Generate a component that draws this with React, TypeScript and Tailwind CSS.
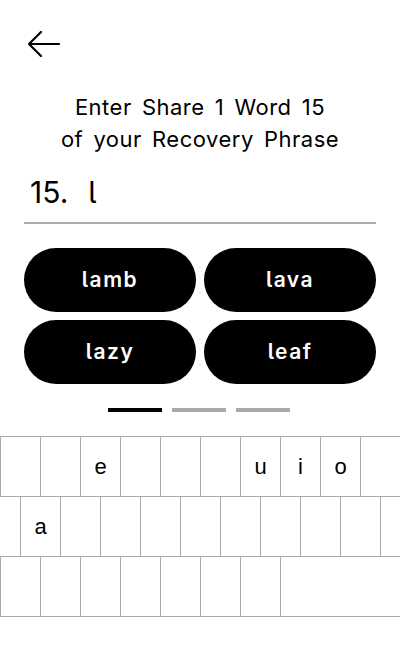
import React from "react";

const inter = "font-['Inter','Noto_Sans',sans-serif] [font-feature-settings:'cv05']";

function Key({ ch, className = "" }: { ch?: string; className?: string }) {
  return (
    <div
      className={`h-full border-l border-[#aaaaaa] flex items-center justify-center text-[22px] text-black font-['Liberation_Sans',Arial,sans-serif] ${className}`}
    >
      {ch ?? ""}
    </div>
  );
}

export default function App() {
  const words = ["lamb", "lava", "lazy", "leaf"];
  const row1 = ["", "", "e", "", "", "", "u", "i", "o", ""];
  const row2 = ["a", "", "", "", "", "", "", "", ""];
  const row3 = ["", "", "", "", "", "", ""];
  return (
    <div className="w-[400px] h-[672px] bg-white flex flex-col overflow-hidden">
      <div className="pt-[30px] pl-[27px]">
        <svg width="34" height="28" viewBox="0 0 34 28" fill="none">
          <path
            d="M2 14 H32 M14 2 L2 14 L14 26"
            stroke="#000"
            strokeWidth="2.2"
            strokeLinecap="round"
            strokeLinejoin="round"
          />
        </svg>
      </div>
      <div
        className={`mt-[33px] text-center text-[22px] leading-[32px] [word-spacing:3.5px] tracking-[0.5px] text-black ${inter}`}
      >
        Enter Share 1 Word 15
        <br />
        of your Recovery Phrase
      </div>
      <div
        className={`mt-[17px] mx-6 pl-[6px] text-[30px] leading-[40px] pb-[10px] border-b-2 border-[#aaaaaa] text-black flex ${inter}`}
      >
        <span>15.</span>
        <span className="ml-[20px]">l</span>
      </div>
      <div className="mt-6 mx-6 grid grid-cols-2 gap-2">
        {words.map((w) => (
          <div
            key={w}
            className={`h-16 rounded-full bg-black text-white flex items-center justify-center text-[21px] tracking-[1.5px] font-semibold ${inter}`}
          >
            {w}
          </div>
        ))}
      </div>
      <div className="mt-6 flex justify-center gap-[10px] pr-[2px]">
        <div className="w-[54px] h-1 bg-black" />
        <div className="w-[54px] h-1 bg-[#aaaaaa]" />
        <div className="w-[54px] h-1 bg-[#aaaaaa]" />
      </div>
      <div className="mt-6 flex flex-col">
        <div className="h-[60px] border-t border-[#aaaaaa] flex">
          {row1.map((c, i) => (
            <Key key={i} ch={c} className="w-10" />
          ))}
        </div>
        <div className="h-[60px] border-t border-[#aaaaaa] flex">
          <div className="w-5 h-full" />
          {row2.map((c, i) => (
            <Key key={i} ch={c} className="w-10" />
          ))}
          <Key className="w-5" />
        </div>
        <div className="h-[61px] border-t border-b border-[#aaaaaa] flex">
          {row3.map((c, i) => (
            <Key key={i} ch={c} className="w-10" />
          ))}
          <Key className="w-[120px]" />
        </div>
      </div>
    </div>
  );
}
